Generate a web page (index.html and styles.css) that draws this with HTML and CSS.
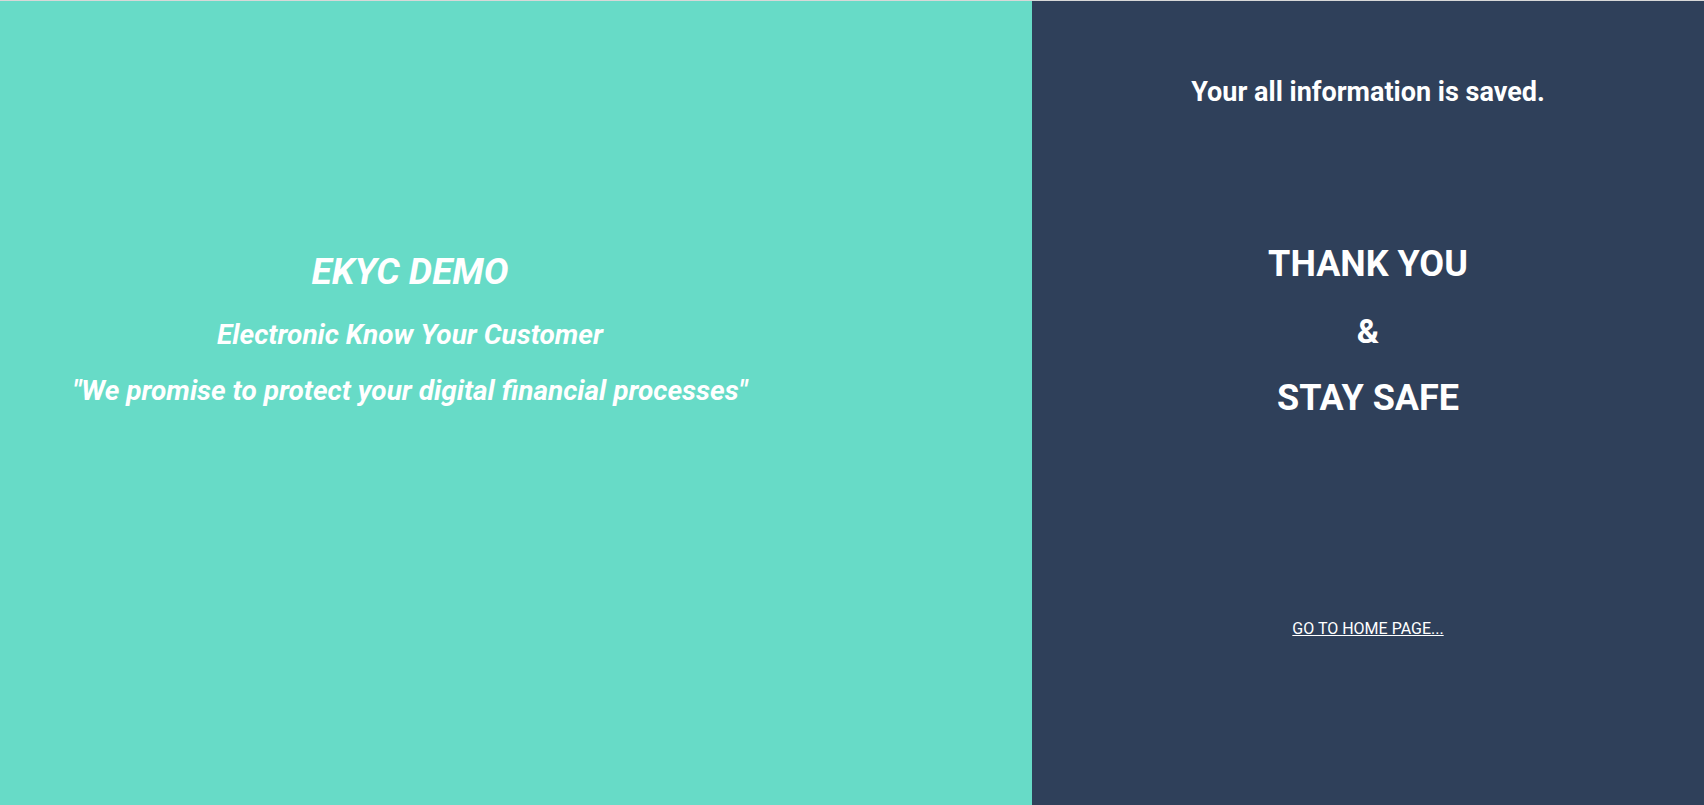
FILE: index.html
```html
<!DOCTYPE html>
<html lang="en">
<head>
<meta charset="utf-8">
<title>EKYC Demo</title>
<link rel="stylesheet" href="styles.css">
</head>
<body>
<div class="page">
  <section class="brand">
    <div class="brand-inner">
      <h1 class="brand-title">EKYC DEMO</h1>
      <p class="brand-sub">Electronic Know Your Customer</p>
      <p class="brand-quote">"We promise to protect your digital financial processes"</p>
    </div>
  </section>
  <section class="done">
    <p class="done-saved">Your all information is saved.</p>
    <h2 class="done-big thank">THANK YOU</h2>
    <h2 class="done-big amp">&amp;</h2>
    <h2 class="done-big safe">STAY SAFE</h2>
    <a class="done-link" href="#">GO TO HOME PAGE...</a>
  </section>
</div>
</body>
</html>
```

FILE: styles.css
```css
html, body {
  margin: 0;
  padding: 0;
  height: 100%;
}
body {
  font-family: Roboto, "Noto Sans", sans-serif;
  color: #ffffff;
  background: #ffffff;
  border-top: 1px solid #d8d8d8;
  box-sizing: border-box;
}
.page {
  display: flex;
  height: 804px;
}
.brand {
  width: 1032px;
  flex: none;
  background: #67dbc7;
}
.brand-inner {
  width: 820px;
  padding-top: 251px;
  text-align: center;
  font-style: italic;
  font-weight: 700;
}
.brand-title {
  margin: 0;
  font-size: 37px;
  line-height: 40px;
  font-weight: 700;
}
.brand-sub {
  margin: 28px 0 0;
  font-size: 28px;
  line-height: 30px;
}
.brand-quote {
  margin: 26px 0 0;
  font-size: 28px;
  line-height: 30px;
}
.done {
  flex: 1;
  background: #2f405a;
  display: flex;
  flex-direction: column;
  align-items: center;
  text-align: center;
}
.done-saved {
  margin: 76px 0 0;
  font-size: 27px;
  line-height: 30px;
  font-weight: 700;
}
.done-big {
  margin: 0;
  font-size: 36px;
  line-height: 40px;
  font-weight: 700;
}
.thank {
  margin-top: 137px;
}
.amp {
  margin-top: 27px;
  font-size: 34px;
}
.safe {
  margin-top: 27px;
}
.done-link {
  margin-top: 201px;
  color: #ffffff;
  font-size: 16px;
  line-height: 20px;
  text-decoration: underline;
}
```
